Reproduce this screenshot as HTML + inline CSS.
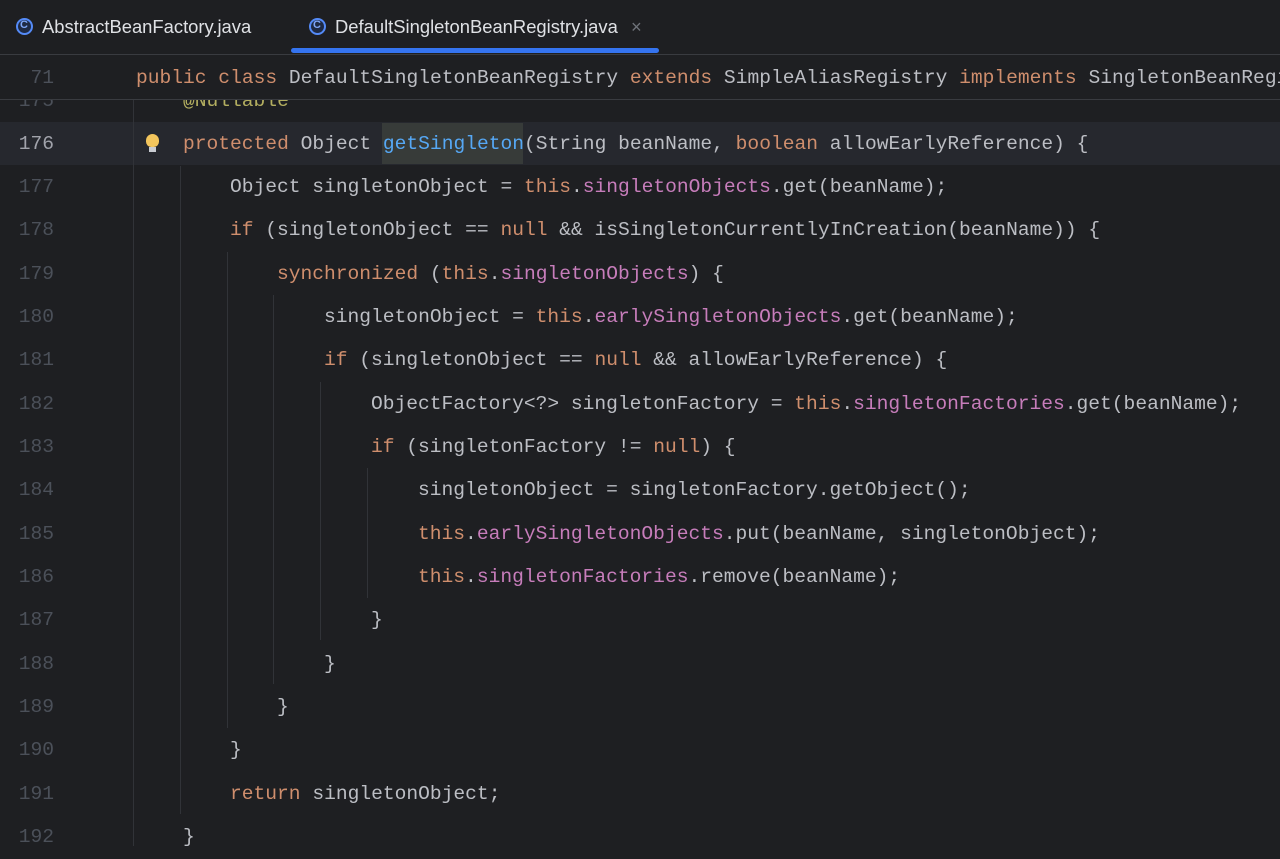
<!DOCTYPE html>
<html><head><meta charset="utf-8"><style>
body{margin:0;width:1280px;height:846px;background:#1e1f22;overflow:hidden;position:relative;font-family:"Liberation Mono",monospace}
.tabs{position:absolute;left:0;top:0;width:1280px;height:54px;border-bottom:1px solid #393b40;background:#1e1f22;font-family:"Liberation Sans",sans-serif;font-size:18.4px;color:#dfe1e5;z-index:5}
.tab{position:absolute;top:16px;white-space:nowrap}
.ic{display:inline-block;width:17px;height:17px;border:2px solid #548af7;border-radius:50%;box-sizing:border-box;vertical-align:-2px;margin-right:9px;position:relative;background:#1e2a44}
.ic:after{content:"C";position:absolute;left:2px;top:-1px;font-size:11px;color:#7fa7f8;font-weight:bold}
.ul{position:absolute;left:291px;top:48px;width:368px;height:5px;background:#3574f0;border-radius:3px}
.ln{position:absolute;left:0;width:54px;text-align:right;color:#4b5059;font-size:19.6px;height:43px;line-height:43px}
.code{position:absolute;white-space:pre;color:#bcbec4;font-size:19.6px;height:43px;line-height:43px}
.k{color:#cf8e6d}.f{color:#c77dbb}.m{color:#56a8f5}.a{color:#b3ae60}
.g{position:absolute;width:1px;background:#313338}
.sticky{position:absolute;left:0;top:55px;width:1280px;height:44px;background:#1e1f22;border-bottom:1px solid #393b40;z-index:4}
.w{position:absolute;left:0;top:1px;width:1280px;height:846px}
</style></head><body>
<div class="tabs">
<div class="tab" style="left:16px"><span class="ic"></span>AbstractBeanFactory.java</div>
<div class="tab" style="left:309px"><span class="ic"></span>DefaultSingletonBeanRegistry.java <span style="color:#6f737a;margin-left:8px">×</span></div>
<div class="ul"></div>
</div>
<div class="sticky">
<div class="ln" style="top:2px">71</div>
<div class="code" style="left:136px;top:2px"><span class="k">public class</span> DefaultSingletonBeanRegistry <span class="k">extends</span> SimpleAliasRegistry <span class="k">implements</span> SingletonBeanRegistry</div>
</div>
<div style="position:absolute;left:0;top:122px;width:1280px;height:43px;background:#26282e"></div>
<div style="position:absolute;left:382px;top:123px;width:141px;height:41px;background:#373b39"></div>
<div class="g" style="left:133px;top:100px;height:746px"></div>
<div class="g" style="left:180px;top:166px;height:648px"></div>
<div class="g" style="left:227px;top:252px;height:476px"></div>
<div class="g" style="left:273px;top:295px;height:389px"></div>
<div class="g" style="left:320px;top:382px;height:258px"></div>
<div class="g" style="left:367px;top:468px;height:130px"></div>
<div class="w">
<div class="ln" style="top:79px">175</div>
<div class="code a" style="left:183px;top:79px">@Nullable</div>
<div class="ln" style="top:122px;color:#a1a3ab">176</div>
<div style="position:absolute;left:146px;top:133px;width:13px;height:13px;background:#f2c55c;border-radius:50% 50% 40% 40%"></div>
<div style="position:absolute;left:149px;top:146px;width:7px;height:5px;background:#c9ccd1"></div>
<div class="code" style="left:183px;top:122px"><span class="k">protected</span> Object <span class="m">getSingleton</span>(String beanName, <span class="k">boolean</span> allowEarlyReference) {</div>
<div class="ln" style="top:165px">177</div>
<div class="code" style="left:230px;top:165px">Object singletonObject = <span class="k">this</span>.<span class="f">singletonObjects</span>.get(beanName);</div>
<div class="ln" style="top:208px">178</div>
<div class="code" style="left:230px;top:208px"><span class="k">if</span> (singletonObject == <span class="k">null</span> &amp;&amp; isSingletonCurrentlyInCreation(beanName)) {</div>
<div class="ln" style="top:252px">179</div>
<div class="code" style="left:277px;top:252px"><span class="k">synchronized</span> (<span class="k">this</span>.<span class="f">singletonObjects</span>) {</div>
<div class="ln" style="top:295px">180</div>
<div class="code" style="left:324px;top:295px">singletonObject = <span class="k">this</span>.<span class="f">earlySingletonObjects</span>.get(beanName);</div>
<div class="ln" style="top:338px">181</div>
<div class="code" style="left:324px;top:338px"><span class="k">if</span> (singletonObject == <span class="k">null</span> &amp;&amp; allowEarlyReference) {</div>
<div class="ln" style="top:382px">182</div>
<div class="code" style="left:371px;top:382px">ObjectFactory&lt;?&gt; singletonFactory = <span class="k">this</span>.<span class="f">singletonFactories</span>.get(beanName);</div>
<div class="ln" style="top:425px">183</div>
<div class="code" style="left:371px;top:425px"><span class="k">if</span> (singletonFactory != <span class="k">null</span>) {</div>
<div class="ln" style="top:468px">184</div>
<div class="code" style="left:418px;top:468px">singletonObject = singletonFactory.getObject();</div>
<div class="ln" style="top:512px">185</div>
<div class="code" style="left:418px;top:512px"><span class="k">this</span>.<span class="f">earlySingletonObjects</span>.put(beanName, singletonObject);</div>
<div class="ln" style="top:555px">186</div>
<div class="code" style="left:418px;top:555px"><span class="k">this</span>.<span class="f">singletonFactories</span>.remove(beanName);</div>
<div class="ln" style="top:598px">187</div>
<div class="code" style="left:371px;top:598px">}</div>
<div class="ln" style="top:642px">188</div>
<div class="code" style="left:324px;top:642px">}</div>
<div class="ln" style="top:685px">189</div>
<div class="code" style="left:277px;top:685px">}</div>
<div class="ln" style="top:728px">190</div>
<div class="code" style="left:230px;top:728px">}</div>
<div class="ln" style="top:772px">191</div>
<div class="code" style="left:230px;top:772px"><span class="k">return</span> singletonObject;</div>
<div class="ln" style="top:815px">192</div>
<div class="code" style="left:183px;top:815px">}</div>
</div>
</body></html>
